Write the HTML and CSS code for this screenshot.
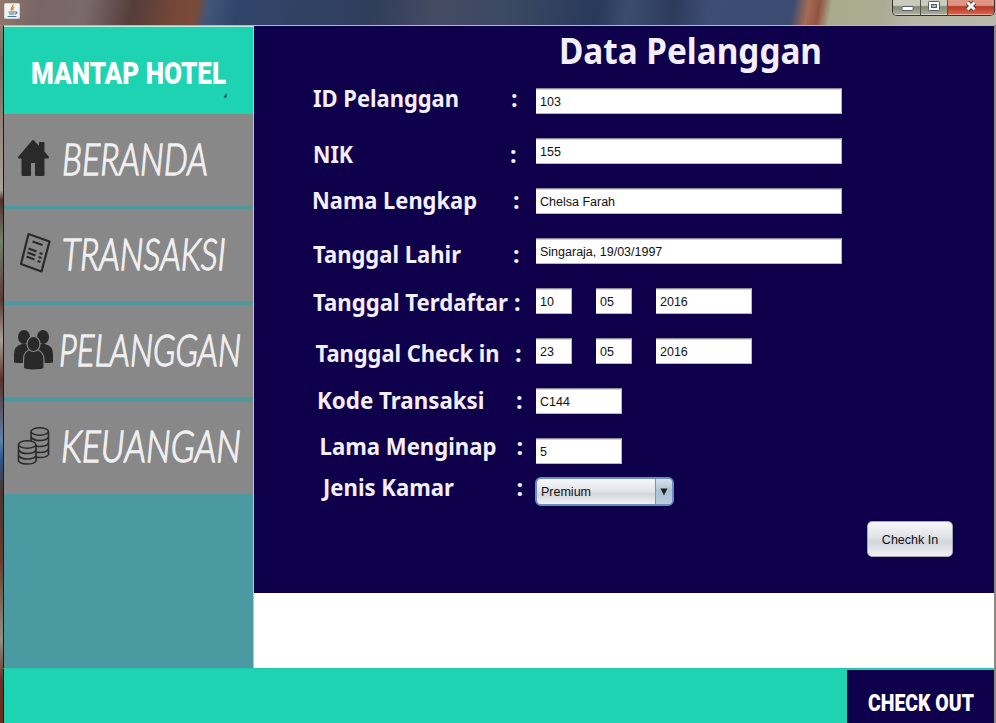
FILE: index.html
```html
<!DOCTYPE html>
<html lang="id">
<head>
<meta charset="utf-8">
<title>Mantap Hotel</title>
<link rel="stylesheet" href="styles.css">
</head>
<body>
<div class="window">
  <header class="titlebar">
    <svg class="java" width="16" height="16" viewBox="0 0 16 16">
      <rect x=".5" y=".5" width="15" height="15" rx="1" fill="#f1f3f5" stroke="#cfd6dc"/>
      <path d="M9 1.500c1 2-3.400 3-1.500 6M10.500 4c-2 1-2.300 2-1.200 3.500" fill="none" stroke="#d9822f" stroke-width="1.300"/>
      <path d="M4.500 9h6.500M5 11h5.500M3.500 13.500h9M11 9c2.500-.5 2.500 2 0 2.300" fill="none" stroke="#48719b" stroke-width="1.100"/>
    </svg>
    <div class="controls">
      <span class="ctl min"><svg width="28" height="15" viewBox="0 0 28 15"><rect x="9" y="6.500" width="11" height="4" rx=".8" fill="#fff" stroke="#555b66"/></svg></span>
      <span class="ctl max"><svg width="26" height="15" viewBox="0 0 26 15"><rect x="7.500" y="1.500" width="11" height="9" rx=".8" fill="#fff" stroke="#555b66"/><rect x="10.500" y="4.500" width="5" height="3" fill="#b0b5ad" stroke="#555b66"/></svg></span>
      <span class="ctl close"><svg width="47" height="15" viewBox="0 0 47 15"><path d="M19.500 2.500l7 7M26.500 2.500l-7 7" stroke="#5b3030" stroke-width="4.600"/><path d="M19.500 2.500l7 7M26.500 2.500l-7 7" stroke="#fff" stroke-width="2.900"/></svg></span>
    </div>
  </header>

  <div class="content">
    <aside class="sidebar">
      <div class="brand">
        <svg width="249" height="87">
          <text class="brand-name" x="27" y="57" textLength="195" lengthAdjust="spacingAndGlyphs">MANTAP HOTEL</text>
          <path d="M222.500 66v4.500h-3z" fill="#123c42"/>
        </svg>
      </div>
      <nav class="nav">
        <a class="item item-home">
          <svg width="249" height="92">
            <g fill="#2a2a2a" stroke="#2a2a2a" stroke-width="2" stroke-linejoin="round">
              <path d="M29 27L15 43.500h3.500V61h7.500V48h6v13h7.500V43.500H44L39.500 38v-9h-3.500v5.500z"/>
            </g>
            <text x="58" y="61" textLength="146" lengthAdjust="spacingAndGlyphs">BERANDA</text>
          </svg>
        </a>
        <a class="item item-trans">
          <svg width="249" height="92">
            <g fill="none" stroke="#2a2a2a" stroke-width="2.200" stroke-linejoin="round">
              <path d="M24.500 25L45.500 32.500 37.500 62.500 17 55z"/>
              <path d="M28.500 32.500l10 3.500M24.500 39.500l8 3M23.500 43.500l8 3M22.500 47.500l8 3M35.500 44l3 1M34.500 48l3 1M33.500 52l3 1"/>
            </g>
            <text x="58" y="61" textLength="164" lengthAdjust="spacingAndGlyphs">TRANSAKSI</text>
          </svg>
        </a>
        <a class="item item-people">
          <svg width="249" height="92">
            <g fill="#292929">
              <ellipse cx="20" cy="32" rx="6" ry="7"/><path d="M10 57V49q0-8 8-10h5q8 2 8 10v9H15q-5 0-5-1z"/>
              <ellipse cx="39" cy="32" rx="6" ry="7"/><path d="M49 57V49q0-8-8-10h-5q-8 2-8 10v9h16q5 0 5-1z"/>
              <g stroke="#888" stroke-width="1.200"><path d="M19.500 62.500V54q0-8 8-10h4q8 2 8.500 10v8.500q0 2.500-10.500 2.500t-10-2.500z"/><ellipse cx="29.500" cy="39" rx="6.500" ry="7.500"/></g>
            </g>
            <text x="55" y="61" textLength="182" lengthAdjust="spacingAndGlyphs">PELANGGAN</text>
          </svg>
        </a>
        <a class="item item-money">
          <svg width="249" height="92">
            <g fill="#888" stroke="#2a2a2a" stroke-width="1.600">
              <path d="M27 30v22.500q2 3 9 3t8.500-3V30"/>
              <path d="M27 35q2 3.500 9 3.500t8.500-3.500M27 41q2 3.500 9 3.500t8.500-3.500M27 47q2 3.500 9 3.500t8.500-3.500" fill="none"/>
              <ellipse cx="35.700" cy="29.500" rx="8.700" ry="3.700"/>
              <path d="M14.500 43v16q2 3 9 3t8.500-3V43"/>
              <path d="M14.500 48q2 3.500 9 3.500t8.500-3.500M14.500 53.500q2 3.500 9 3.500t8.500-3.500" fill="none"/>
              <ellipse cx="23.200" cy="42.500" rx="8.700" ry="3.700"/>
            </g>
            <text x="57" y="60" textLength="180" lengthAdjust="spacingAndGlyphs">KEUANGAN</text>
          </svg>
        </a>
      </nav>
    </aside>

    <main class="main">
      <section class="form">
        <svg class="heading" width="740" height="62"><text x="305" y="37.500" textLength="263" lengthAdjust="spacingAndGlyphs">Data Pelanggan</text></svg>
        <div class="row"><svg class="label"><text x="59" y="19" textLength="146" lengthAdjust="spacingAndGlyphs">ID Pelanggan</text><text x="257" y="19">:</text></svg><span class="field wide">103</span></div>
        <div class="row"><svg class="label"><text x="59" y="25" textLength="40" lengthAdjust="spacingAndGlyphs">NIK</text><text x="256" y="25">:</text></svg><span class="field wide">155</span></div>
        <div class="row"><svg class="label"><text x="58" y="21" textLength="165" lengthAdjust="spacingAndGlyphs">Nama Lengkap</text><text x="259" y="21">:</text></svg><span class="field wide">Chelsa Farah</span></div>
        <div class="row"><svg class="label"><text x="59" y="25" textLength="148" lengthAdjust="spacingAndGlyphs">Tanggal Lahir</text><text x="259" y="25">:</text></svg><span class="field wide">Singaraja, 19/03/1997</span></div>
        <div class="row"><svg class="label"><text x="59" y="23" textLength="195" lengthAdjust="spacingAndGlyphs">Tanggal Terdaftar</text><text x="260" y="23">:</text></svg><span class="field day">10</span><span class="field day">05</span><span class="field year">2016</span></div>
        <div class="row"><svg class="label"><text x="61.500" y="24" textLength="184" lengthAdjust="spacingAndGlyphs">Tanggal Check in</text><text x="261" y="24">:</text></svg><span class="field day">23</span><span class="field day">05</span><span class="field year">2016</span></div>
        <div class="row"><svg class="label"><text x="63" y="21" textLength="167.500" lengthAdjust="spacingAndGlyphs">Kode Transaksi</text><text x="262" y="21">:</text></svg><span class="field code">C144</span></div>
        <div class="row last"><svg class="label"><text x="65.500" y="17" textLength="177" lengthAdjust="spacingAndGlyphs">Lama Menginap</text><text x="262.500" y="17">:</text></svg><span class="field code">5</span></div>
        <div class="row select-row"><svg class="label"><text x="69" y="19" textLength="131" lengthAdjust="spacingAndGlyphs">Jenis Kamar</text><text x="262.500" y="19">:</text></svg><span class="select"><span class="value">Premium</span><span class="arrow"><svg width="8" height="8" viewBox="0 0 8 8"><path d="M.5.5h7L4 7.500z" fill="#1e2124"/></svg></span></span></div>
        <div class="actions"><button class="button">Chechk In</button></div>
      </section>
      <section class="blank"></section>
    </main>
  </div>

  <footer class="footer">
    <div class="checkout"><svg width="147" height="53"><text x="21" y="40.500" textLength="106" lengthAdjust="spacingAndGlyphs">CHECK OUT</text></svg></div>
  </footer>
</div>
</body>
</html>
```
FILE: styles.css
```css
* { box-sizing: border-box; }
body { margin: 0; font-family: "Liberation Sans", Arial, sans-serif; }
svg { display: block; overflow: visible; }

.window {
  width: 996px;
  height: 723px;
  overflow: hidden;
  display: flex;
  flex-direction: column;
  padding: 0 2px 0 3px;
  background:
    linear-gradient(90deg, transparent 50%, #8b8b84 50%),
    linear-gradient(180deg, #a9927c 0, #77665f 60px, #96877d 130px, #a9a196 190px, #51302c 200px, #71806a 240px, #5b3a36 300px, #a7a093 340px, #5a302b 380px, #5d82ac 440px, #2d568d 460px, #4a3531 490px, #6c3a31 560px, #919080 640px, #6a3029 680px, #6d2a25 723px);
}

.titlebar {
  height: 25px;
  margin: 0 -2px 0 -3px;
  padding-left: 4px;
  display: flex;
  justify-content: space-between;
  background: linear-gradient(100deg, #94776a 0, #776568 40px, #7b6a6b 85px, #563d3b 132px, #754837 175px, #7b4a36 193px, #42557b 207px, #31456a 235px, #303e5c 370px, #444b61 430px, #3c4963 500px, #28395a 590px, #3c4d70 620px, #2d3c5c 665px, #3d4d74 700px, #3c4b70 782px, #a76a53 797px, #8f5340 808px, #a9ab8e 820px, #a9ac91 870px, #b7b7a6 900px, #b7b9aa 996px);
}
.java { margin-top: 3px; }
.controls {
  height: 16px;
  width: 103px;
  margin-right: 1px;
  display: flex;
  border: 1px solid #343330;
  border-top: 0;
  border-radius: 0 0 5px 5px;
  overflow: hidden;
}
.ctl { height: 15px; box-shadow: inset 0 -1px #ffffff70; }
.min, .max { background: linear-gradient(#cacbbf 0 35%, #868878 45%, #b0b1a0); border-right: 1px solid #54544d; }
.min { width: 28px; }
.max { width: 27px; }
.close { flex: 1; background: linear-gradient(#de9583 0 35%, #b73a25 45%, #dc6650); }

.content {
  height: 643px;
  display: flex;
  border-top: 1px solid #bab9ae;
  border-left: 1px solid #19191d;
}
.sidebar { width: 250px; background: #4b9aa2; border-right: 1px solid #b5c5cb; }
.brand { height: 88px; background: #1ed3b2; border-top: 1px solid #b9ebdf; }
.brand-name { font: 900 30.500px Roboto, sans-serif; fill: #fff; }
.item { display: block; height: 92px; background: #888; }
.item text { font: italic 300 43px Lato, sans-serif; fill: #f0f0f0; stroke: #f0f0f0; stroke-width: 1.300; }
.item-home { margin-bottom: 3px; }
.item-trans { margin-bottom: 4px; }
.item-people { margin-bottom: 5px; }

.main { flex: 1; display: flex; flex-direction: column; }
.form { height: 567px; background: #0f004c; }
.heading text { font: 700 35px "Noto Sans", "Open Sans", sans-serif; fill: #f3effc; }
.row { display: flex; height: 26px; margin-bottom: 24px; }
.last { margin-bottom: 13px; }
.label { width: 282px; height: 26px; }
.label text { font: 700 23.500px "Noto Sans", "Open Sans", sans-serif; fill: #f3effc; }
.field {
  height: 26px;
  padding-left: 4px;
  font-size: 12.500px;
  line-height: 27px;
  color: #111;
  background: #fff;
  border: solid #b8b5c8;
  border-width: 1px 1px 1px 0;
  border-top-color: #8d8b98;
  box-shadow: inset 0 1px #d5d5da;
  white-space: nowrap;
}
.wide { width: 306px; }
.day { width: 36px; margin-right: 24px; }
.year { width: 96px; }
.code { width: 86px; }
.select-row { height: 29px; margin-bottom: 0; }
.select {
  width: 139px;
  height: 29px;
  margin-left: -1px;
  display: flex;
  border: 2px solid #6a8fbd;
  border-radius: 6px;
  background: linear-gradient(#f8f8fa, #e4e6ea 45%, #d3d6dd 60%, #f1f2f5);
  overflow: hidden;
}
.value { flex: 1; padding-left: 4px; font-size: 12.500px; line-height: 26px; color: #111; }
.arrow { width: 17px; display: grid; place-items: center; background: linear-gradient(#d9e4ec, #a9c0d0 50%, #b9cfdd); border-left: 1px solid #8094a8; }
.actions { display: flex; justify-content: flex-end; padding: 15px 41px 0 0; }
.button {
  width: 86px;
  height: 36px;
  padding: 2px 0 0;
  font: 12.500px "Liberation Sans", Arial, sans-serif;
  color: #111;
  border: 1px solid #a5a6b2;
  border-radius: 5px;
  background: linear-gradient(#f7f7f9, #e3e5e9 40%, #d3d6dd 60%, #f0f1f4);
}
.blank { flex: 1; background: #fff; }

.footer { height: 55px; display: flex; justify-content: flex-end; background: #1ed3b2; border-left: 1px solid #19191d; border-top: 1px solid #20c8ab; }
.checkout { width: 147px; margin-top: 1px; background: #0f004c; }
.checkout text { font: 900 24px Roboto, sans-serif; fill: #fff; }
```
